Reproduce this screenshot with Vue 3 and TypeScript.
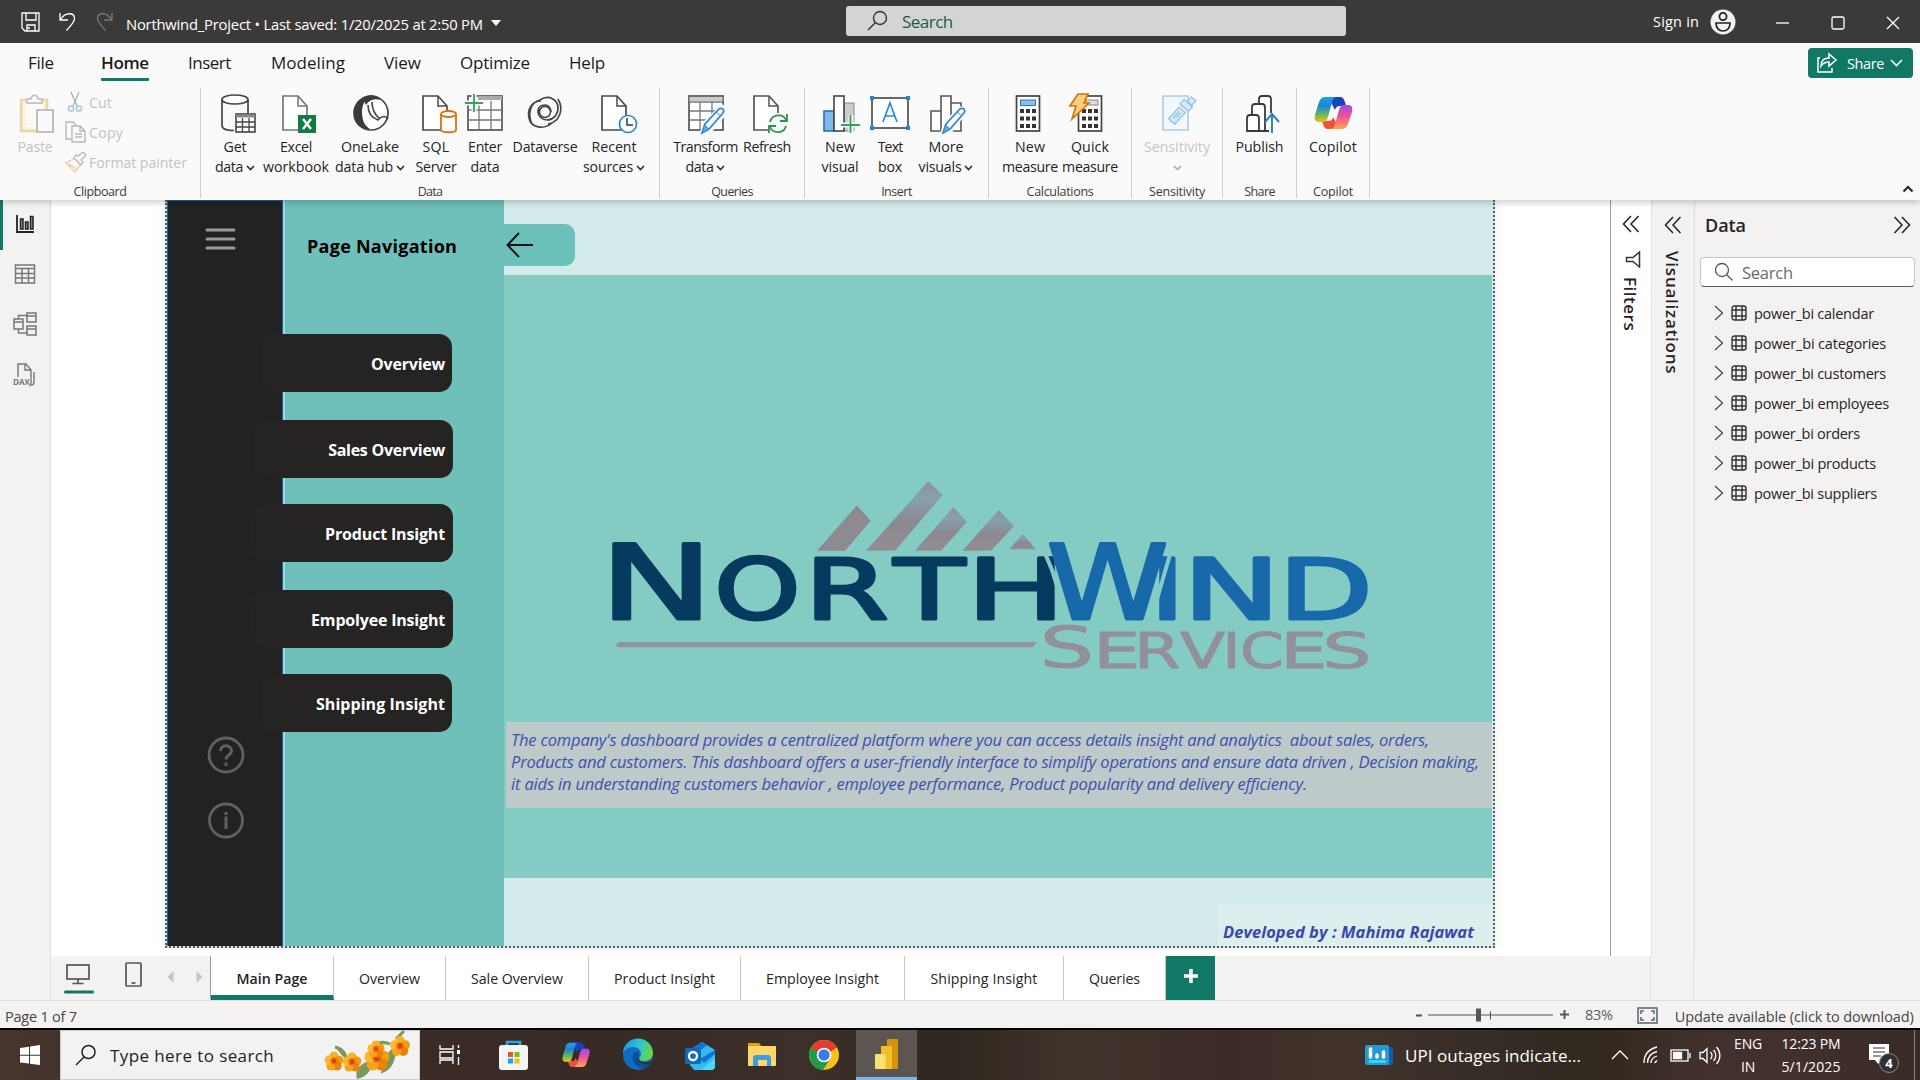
<script setup lang="ts">
interface RibbonItem {
  icon: string
  width: number
  dx?: number
  lines: [string, number][]
  caret?: boolean
  disabled?: boolean
}
interface RibbonGroup {
  label: string
  labelWidth: number
  width: number
  items: RibbonItem[]
}

// Tunes letter spacing so that a label takes exactly the given length in px.
const vFit = {
  mounted(el: HTMLElement, binding: { value: number; modifiers: Record<string, boolean> }) {
    const range = document.createRange()
    range.selectNodeContents(el)
    const box = range.getBoundingClientRect()
    const size = binding.modifiers.vertical ? box.height : box.width
    const count = (el.textContent ?? '').length
    if (count > 1) el.style.letterSpacing = `${(binding.value - size) / (count - 0.5)}px`
  },
}

const copilot = `<defs><linearGradient id="cpa" x1="0" y1="0" x2="0" y2="1"><stop offset="0" stop-color="#1fa2f0"/><stop offset=".35" stop-color="#1b83d8"/><stop offset=".7" stop-color="#62b95a"/><stop offset="1" stop-color="#f4c20d"/></linearGradient><linearGradient id="cpb" x1="0" y1="0" x2="0" y2="1"><stop offset="0" stop-color="#a04be8"/><stop offset=".45" stop-color="#ee5095"/><stop offset="1" stop-color="#ffa552"/></linearGradient></defs>
<path d="M14 1h12c3 0 4 2 5 5l1 4h-6c-3 0-4 1-5 4z" fill="#1742c0"/><path d="M26 33H14c-3 0-4-2-5-5l-1-3h6c3 0 4-1 5-4z" fill="#f0503c"/>
<path d="M11 1h12c-3 0-4 2-5 5l-4 15c-1 4-3 5-6 5H5c-4 0-5-3-4-7L5 6c1-3 3-5 6-5z" fill="url(#cpa)"/><path d="M28 33H16c3 0 4-2 5-5l4-14c1-4 3-5 6-5h3c4 0 5 3 4 7l-4 12c-1 3-3 5-6 5z" fill="url(#cpb)"/>`

const doc = '<path d="M4 3h15l9 10v24H4z" fill="#fff" stroke="#4a4a4a" stroke-width="1.7"/><path d="M19 3v10h9" fill="none" stroke="#4a4a4a" stroke-width="1.5"/>'
const pencil = '<path d="M16 40l3-9 14-15c3-2 6 1 4 4L23 36z" fill="#fff" stroke="#2b88d8" stroke-width="1.7"/><path d="M16 40l2.500-8 4.500 4z" fill="#62a9e6" stroke="#2b88d8"/><path d="M30 19l5 4" stroke="#2b88d8"/>'
const keys = (x: number, y: number) =>
  [0, 1, 2].map(r => [0, 1, 2].map(c => `<rect x="${x + c * 6}" y="${y + r * 7.5}" width="4" height="4" fill="#333"/>`).join('')).join('')

const icons: Record<string, string> = {
  data: '<ellipse cx="17" cy="6.500" rx="13" ry="4.500" fill="#fff" stroke="#444" stroke-width="1.700"/><path d="M4 6.500v26c0 3 4 5 12 5M30 6.500V20" fill="none" stroke="#444" stroke-width="1.700"/><rect x="18" y="21" width="19" height="18" fill="#fff" stroke="#444" stroke-width="1.600"/><path d="M18 23h19" stroke="#888" stroke-width="3"/><path d="M18 29h19M18 34h19M24.500 25v14M31 25v14" stroke="#444" stroke-width="1.300"/>',
  excel: doc.replace(/#4a4a4a/g, '#777') + '<rect x="19" y="22" width="18" height="18" fill="#107c41"/><path d="M24 26l8 10M32 26l-8 10" stroke="#fff" stroke-width="2.500"/>',
  lake: '<circle cx="20" cy="20" r="17" fill="#fff" stroke="#444" stroke-width="1.700"/><path d="M20 3c-5 2-9 8-9 16 0 9 3 14 8 17C8 37 3 29 3 20 3 11 10 3 20 3z" fill="#3b3a39"/><path d="M12 6c4-5 13-5 17 1-6-2-11 0-14 5z" fill="#3b3a39"/><path d="M17 12c0 8 4 13 10 15 5-5 8-4 10-1M21 9c0 7 3 13 8 17" fill="none" stroke="#444" stroke-width="1.600"/>',
  sql: doc + '<path d="M22 21v16c0 3 15 3 15 0V21" fill="#fff" stroke="#d9730d" stroke-width="1.800"/><ellipse cx="29.500" cy="21" rx="7.500" ry="3" fill="#fff" stroke="#d9730d" stroke-width="1.800"/>',
  enter: '<rect x="3" y="3" width="34" height="34" fill="#fff" stroke="#555" stroke-width="1.700"/><path d="M13 5h24" stroke="#aaa" stroke-width="4"/><path d="M3 17h34M3 27h34M14 8v29M26 8v29" stroke="#777" stroke-width="1.300"/><path d="M0 10h20M9 0v20" stroke="#fafafa" stroke-width="5"/><path d="M0 10h18M9 1v18" stroke="#31a354" stroke-width="1.800"/>',
  dataverse: '<path d="M15 7c9-6 18 0 18 8 0 7-5 12-11 12-5 0-9-4-9-8 0-5 3-7 7-7 3 0 6 3 6 7" fill="none" stroke="#444" stroke-width="1.700"/><path d="M27 30C19 37 6 35 4 25 2 16 7 8 16 8M33 6c6 10 2 23-10 25M15 7C6 9 2 20 7 31" fill="none" stroke="#444" stroke-width="1.600"/><circle cx="20" cy="19" r="5.500" fill="none" stroke="#444" stroke-width="1.500"/>',
  recent: doc + '<circle cx="30" cy="31" r="8.500" fill="#fff" stroke="#2b88d8" stroke-width="1.700"/><path d="M29 25v7h6" fill="none" stroke="#333" stroke-width="1.500"/>',
  transform: '<rect x="3" y="3" width="34" height="34" fill="#fff" stroke="#555" stroke-width="1.700"/><rect x="3.500" y="4" width="33" height="4" fill="#ccc"/><path d="M3 9h34M3 18h34M3 27h34M14 9v28M26 9v28" stroke="#777" stroke-width="1.300"/><path d="M13 42l4-13 19-18 8 6-18 22z" fill="#fafafa"/>' + pencil,
  refresh: doc.replace(/#4a4a4a/g, '#555') + '<circle cx="28" cy="31" r="11" fill="#fafafa"/><path d="M20 29c2-8 13-9 16-2M37 21v7h-7M36 33c-2 8-13 8-16 1M19 40v-7h7" fill="none" stroke="#31914a" stroke-width="1.800"/>',
  visual: '<rect x="4" y="18" width="10" height="20" fill="#7fb8ea" stroke="#2672b4" stroke-width="1.600"/><rect x="24" y="10" width="10" height="28" fill="#ccc" stroke="#888"/><rect x="14" y="3" width="10" height="35" fill="#fff" stroke="#444" stroke-width="1.600"/><path d="M22 32h18M31 22v18" stroke="#fafafa" stroke-width="5"/><path d="M21 32h19M30.500 22v18" stroke="#31a354" stroke-width="1.800"/>',
  textbox: '<rect x="2" y="5" width="36" height="30" fill="#fff" stroke="#444" stroke-width="1.600"/><path d="M13 29l7-19 7 19M15.500 23h9" fill="none" stroke="#2b88d8" stroke-width="1.700"/><path d="M0 3h4v4H0zM36 3h4v4h-4zM0 33h4v4H0zM36 33h4v4h-4z" fill="#1e88d2"/>',
  more: '<path d="M4 18h10v20H4zM24 10h10v28H24zM14 3h10v35H14z" fill="#fff" stroke="#555" stroke-width="1.600"/><path d="M13 42l3-12 17-17 8 5-18 24z" fill="#fafafa"/>' + pencil,
  measure: '<rect x="8.500" y="3" width="23" height="35" fill="#fff" stroke="#444" stroke-width="1.700"/><rect x="12.500" y="7" width="15" height="5.500" fill="#8bbcf0" stroke="#2b78c0"/>' + keys(12, 16),
  quick: '<rect x="12.500" y="3" width="23" height="35" fill="#fff" stroke="#444" stroke-width="1.700"/><rect x="20" y="7" width="12" height="5" fill="#ddd" stroke="#888"/>' + keys(16, 16) + '<path d="M12 1h10l-4 9h5L6 26l4-13H4z" fill="#fbd080" stroke="#d9730d" stroke-width="1.700"/>',
  sensitivity: '<path d="M6 3h25v34H6z" fill="#f1f8fc" stroke="#a6cde8" stroke-width="1.600"/><g transform="translate(7 6) scale(.75) rotate(42 20 20)" fill="#d6eaf7" stroke="#93c4e6" stroke-width="1.800"><rect x="14" y="13" width="11" height="21"/><path d="M18 17v12M21 17v9"/><rect x="12" y="1" width="15" height="8"/><rect x="17" y="-8" width="8" height="8"/></g>',
  publish: '<path d="M4 38V25c0-2 1-3 3-3h6c2 0 3 1 3 3v13zM9 22v-8c0-2 1-3 3-3h7c2 0 3 1 3 3v24h-6M16 11V6c0-2 1-3 3-3h6c2 0 3 1 3 3v14M22 38h4" fill="#fff" stroke="#3b3a39" stroke-width="1.800"/><path d="M29 40V21M22 29l7-8 7 8" fill="none" stroke="#2580b8" stroke-width="1.900"/>',
  copilot: `<g transform="translate(1 3)">${copilot}</g>`,
}

const groups: RibbonGroup[] = [
  {
    label: 'Data', labelWidth: 25, width: 459, items: [
      { icon: 'data', width: 68, dx: 3, lines: [['Get', 23], ['data', 28]], caret: true },
      { icon: 'excel', width: 54, dx: 3, lines: [['Excel', 32], ['workbook', 66]] },
      { icon: 'lake', width: 94, dx: 1, lines: [['OneLake', 58], ['data hub', 58]], caret: true },
      { icon: 'sql', width: 38, dx: 3, lines: [['SQL', 27], ['Server', 41]] },
      { icon: 'enter', width: 60, lines: [['Enter', 34], ['data', 29]] },
      { icon: 'dataverse', width: 60, lines: [['Dataverse', 65]] },
      { icon: 'recent', width: 78, dx: 4, lines: [['Recent', 45], ['sources', 50]], caret: true },
    ],
  },
  {
    label: 'Queries', labelWidth: 42, width: 145, items: [
      { icon: 'transform', width: 91, lines: [['Transform', 65], ['data', 28]], caret: true },
      { icon: 'refresh', width: 32, dx: 3, lines: [['Refresh', 48]] },
    ],
  },
  {
    label: 'Insert', labelWidth: 31, width: 184, items: [
      { icon: 'visual', width: 70, lines: [['New', 30], ['visual', 37]] },
      { icon: 'textbox', width: 30, lines: [['Text', 25], ['box', 24]] },
      { icon: 'more', width: 82, dx: 1, lines: [['More', 35], ['visuals', 43]], caret: true },
    ],
  },
  {
    label: 'Calculations', labelWidth: 67, width: 143, items: [
      { icon: 'measure', width: 82, dx: -2, lines: [['New', 30], ['measure', 56]] },
      { icon: 'quick', width: 38, dx: -4, lines: [['Quick', 38], ['measure', 56]] },
    ],
  },
  { label: 'Sensitivity', labelWidth: 56, width: 91, items: [{ icon: 'sensitivity', width: 90, lines: [['Sensitivity', 66]], caret: true, disabled: true }] },
  { label: 'Share', labelWidth: 31, width: 74, items: [{ icon: 'publish', width: 73, dx: 3, lines: [['Publish', 48]] }] },
  { label: 'Copilot', labelWidth: 40, width: 73, items: [{ icon: 'copilot', width: 72, lines: [['Copilot', 48]] }] },
]

const menu: [string, number, number][] = [
  ['File', 28, 26], ['Home', 47, 48], ['Insert', 39, 43], ['Modeling', 40, 74],
  ['View', 39, 37], ['Optimize', 39, 70], ['Help', 39, 36],
]
const navButtons: [string, number, number, number, number, number][] = [
  ['Overview', 262, 334, 190, 58, 74],
  ['Sales Overview', 254, 420, 199, 58, 117],
  ['Product Insight', 251, 504, 202, 58, 120],
  ['Empolyee Insight', 251, 590, 202, 58, 134],
  ['Shipping Insight', 262, 674, 190, 58, 129],
]
const intro: [string, number][] = [
  ["The company's dashboard provides a centralized platform where you can access details insight and analytics\u00a0 about sales, orders,", 918],
  ['Products and customers. This dashboard offers a user-friendly interface to simplify operations and ensure data driven , Decision making,', 968],
  ['it aids in understanding customers behavior , employee performance, Product popularity and delivery efficiency.', 796],
]
const tables: [string, number][] = [
  ['power_bi calendar', 120], ['power_bi categories', 132], ['power_bi customers', 132],
  ['power_bi employees', 135], ['power_bi orders', 106], ['power_bi products', 122], ['power_bi suppliers', 123],
]
const tabs: [string, number, number][] = [
  ['Main Page', 123, 71], ['Overview', 112, 61], ['Sale Overview', 143, 92], ['Product Insight', 152, 101],
  ['Employee Insight', 164, 113], ['Shipping Insight', 159, 107], ['Queries', 102, 51],
]
const flowers = [[335, 30, 9], [353, 31, 9], [378, 27, 12], [401, 15, 9.5], [377, 18, 8]]

// Left bearing, ink width and advance of the wordmark capitals, in em.
const metrics: Record<string, [number, number, number]> = {
  N: [0.098, 0.552, 0.748], O: [0.056, 0.675, 0.787], R: [0.098, 0.568, 0.695], T: [-0.003, 0.617, 0.611],
  H: [0.098, 0.556, 0.752], W: [0.033, 0.923, 0.989], I: [0.098, 0.099, 0.295], D: [0.098, 0.613, 0.77],
  S: [0.066, 0.503, 0.635], E: [0.098, 0.47, 0.632], V: [0.008, 0.668, 0.684], C: [0.056, 0.588, 0.698],
}
const place = (glyphs: [string, number, number, number][], stroke: number) =>
  glyphs.map(([ch, from, to, size]) => {
    const [lsb, ink, adv] = metrics[ch]
    const scale = (to - from - stroke) / ink
    return { ch, size, x: from + stroke / 2 - lsb * scale, length: adv * scale }
  })
const words = [
  { fill: '#063a5f', stroke: 3, y: 159, glyphs: place([['N', 23, 110, 103], ['O', 129, 206, 84], ['R', 225, 297, 84], ['T', 302, 377, 84], ['H', 388, 464, 84]], 3) },
  { fill: '#1769aa', stroke: 3, y: 159, glyphs: place([['W', 459, 576, 103], ['I', 570, 585, 84], ['N', 604, 679, 84], ['D', 699, 777, 84]], 3) },
  { fill: '#92909a', stroke: 1, y: 207.5, glyphs: place([['S', 455, 499, 57], ['E', 510, 546, 49], ['R', 550, 589, 49], ['V', 590, 635, 49], ['I', 638, 645, 49], ['C', 653, 691, 49], ['E', 697, 733, 49], ['S', 737, 777, 49]], 1) },
]
</script>

<template>
  <div class="app">
    <header class="titlebar">
      <svg class="quick" width="100" height="24" viewBox="0 0 100 24" fill="none" stroke="#fff" stroke-width="1.300">
        <path d="M1 3h17v18H4l-3-3zM5 3v7h10V3M6 21v-6h8v6M6 18h3" />
        <path d="M39 3v7h8M39.500 9.500c5-8 14-7 14-1 0 4-4 7-8 12" />
        <path d="M91 3v7h-8M90.500 9.500c-5-8-14-7-14-1 0 4 4 7 8 12" stroke="#777" />
      </svg>
      <span v-fit="357" class="doc-name">Northwind_Project • Last saved: 1/20/2025 at 2:50 PM</span>
      <i class="title-caret" />
      <div class="top-search">
        <svg width="22" height="22" viewBox="0 0 22 22" fill="none" stroke="#333" stroke-width="1.400"><circle cx="13" cy="8" r="6.500" /><path d="M8.500 12.500L1 20" /></svg>
        <span v-fit="51">Search</span>
      </div>
      <span v-fit="46" class="signin">Sign in</span>
      <svg class="avatar" width="26" height="26" viewBox="0 0 26 26"><circle cx="13" cy="13" r="12.500" fill="#f3f2f1" /><g fill="none" stroke="#222" stroke-width="1.700"><circle cx="13" cy="7.500" r="3.600" /><path d="M6 14h14c0 5-3 8-7 8s-7-3-7-8z" /></g></svg>
      <svg class="winbtns" width="126" height="16" viewBox="0 0 126 16" fill="none" stroke="#fff" stroke-width="1.300"><path d="M0 8h13" /><rect x="56" y="2" width="12" height="12" rx="1.500" /><path d="M111 2l12 12M123 2l-12 12" /></svg>
    </header>

    <nav class="menu">
      <span v-for="([name, gap, w]) in menu" :key="name" :class="['menu-item', { active: name === 'Home' }]" :style="{ marginLeft: gap + 'px', width: w + 'px' }"><b v-fit="w">{{ name }}</b></span>
      <button class="share">
        <svg width="20" height="22" viewBox="0 0 20 22" fill="none" stroke="#fff" stroke-width="1.500"><path d="M3 6H1v14h14v-4M12 2l7 6-7 6v-4c-4 0-6 1-8 4 0-5 3-8 8-8z" /></svg>
        <span v-fit="37">Share</span>
        <svg class="share-caret" width="13" height="8" viewBox="0 0 13 8" fill="none" stroke="#fff" stroke-width="1.600"><path d="M1 1l5.500 5.500L12 1" /></svg>
      </button>
    </nav>

    <section class="ribbon">
      <div class="group clipboard">
        <div class="clip-body">
          <div class="paste">
            <svg width="36" height="40" viewBox="-2 1 36 40"><path d="M2 7h26v31H2z" fill="#fbf3da" stroke="#efd3a8" stroke-width="2.500" /><path d="M6 11h18v23H6z" fill="#fcfaf5" /><path d="M8 10V6h4c1-5 6-5 7 0h4v4z" fill="#fafafa" stroke="#bbb" stroke-width="1.500" /><path d="M18 17h16v22H18z" fill="#fafafa" stroke="#b0b0b0" stroke-width="1.700" /></svg>
            <span v-fit="35">Paste</span>
          </div>
          <div class="clip-list">
            <div><svg width="22" height="22" viewBox="0 0 22 22" fill="none" stroke="#aaa" stroke-width="1.200"><path d="M6 1l6 14M14 1L8 15" /><circle cx="6" cy="17.500" r="2.600" stroke="#9fc6e4" stroke-width="1.500" /><circle cx="14" cy="17.500" r="2.600" stroke="#9fc6e4" stroke-width="1.500" /></svg><span v-fit="23">Cut</span></div>
            <div><svg width="22" height="22" viewBox="0 0 22 22" fill="#fafafa" stroke="#b5b5b5" stroke-width="1.300"><path d="M6 18H1V1h7l3 3" /><path d="M7 5h8l5 5v11H7zM15 5v5h5M10 13h7M10 16h7" /></svg><span v-fit="34">Copy</span></div>
            <div><svg width="22" height="22" viewBox="0 0 22 22" fill="#fafafa" stroke="#b5b5b5" stroke-width="1.300"><path d="M1 12l9-5 6 6-6 8z" stroke="#efc9a0" /><path d="M4 13l7 5" stroke="#efc9a0" /><path d="M9 7l7 7 2-3-2-2 5-5-3-3-5 4-2-1z" /></svg><span v-fit="98">Format painter</span></div>
          </div>
        </div>
        <span v-fit="53" class="group-label">Clipboard</span>
      </div>
      <div v-for="g in groups" :key="g.label" class="group" :style="{ width: g.width + 'px' }">
        <div class="items">
          <div v-for="it in g.items" :key="it.icon" :class="['item', { disabled: it.disabled }]" :style="{ width: it.width + 'px' }">
            <svg width="40" height="42" :viewBox="`${-(it.dx ?? 0)} 0 40 42`" v-html="icons[it.icon]" />
            <div v-for="([t, w], i) in it.lines" :key="t" class="line">
              <span v-fit="w">{{ t }}</span>
              <svg v-if="it.caret && i === 1" class="caret" width="9" height="6" viewBox="0 0 9 6"><path d="M1 1l3.500 3.500L8 1" fill="none" stroke="#333" stroke-width="1.700" /></svg>
            </div>
            <div v-if="it.caret && it.lines.length === 1" class="line"><svg class="caret" width="9" height="6" viewBox="0 0 9 6"><path d="M1 1l3.500 3.500L8 1" fill="none" stroke="#aaa" stroke-width="1.700" /></svg></div>
          </div>
        </div>
        <span v-fit="g.labelWidth" class="group-label">{{ g.label }}</span>
      </div>
      <svg class="collapse" width="12" height="8" viewBox="0 0 12 8"><path d="M1.500 6.500L6 2l4.500 4.500" fill="none" stroke="#222" stroke-width="2" /></svg>
    </section>

    <main class="workspace">
      <aside class="rail">
        <i class="rail-active" />
        <svg width="26" height="26" viewBox="0 0 26 26" fill="none" stroke="#222" stroke-width="1.500"><path d="M5 4v17h17" stroke-width="1.800" /><path d="M8.500 8h2.500v10H8.500zM13.500 11h2.500v7h-2.500zM18.500 5.500H21V18h-2.500z" fill="#999" /></svg>
        <svg width="26" height="26" viewBox="0 0 26 26" fill="none" stroke="#777" stroke-width="1.500"><rect x="3.500" y="4" width="19" height="18" /><path d="M3 7.500h20M3 12.500h20M3 17h20M10 8v14M16.500 8v14" /></svg>
        <svg width="26" height="26" viewBox="0 0 26 26" fill="none" stroke="#777" stroke-width="1.500"><path d="M2 8h9v10H2zM15 2h9v9h-9zM15 15h9v9h-9zM2 11h9M15 5h9M15 18h9M6.500 8V4.500H15M6.500 18v4H15" /></svg>
        <svg width="26" height="26" viewBox="0 0 26 26" fill="none" stroke="#777" stroke-width="1.400"><path d="M6 16V3h8l5 6v13c0 2-1 3-2 3M13 3v6h6M22 11v10c0 2-1 3-3 3" /><text x="1" y="23.500" font-size="9" font-weight="700" fill="#777" stroke="#f3f2f1" stroke-width="1" paint-order="stroke" textLength="17" lengthAdjust="spacingAndGlyphs">DAX</text></svg>
      </aside>

      <section class="canvas">
        <div class="page">
          <div class="side" />
          <div class="drawer" />
          <div class="body" />
          <svg class="burger" width="31" height="24" viewBox="0 0 31 24" stroke="#9b9a99" stroke-width="3" stroke-linecap="round"><path d="M2 3h27M2 12h27M2 21h27" /></svg>
          <h2 class="nav-title"><span v-fit="150">Page Navigation</span></h2>
          <div class="back"><svg width="28" height="26" viewBox="0 0 28 26" fill="none" stroke="#111" stroke-width="1.900"><path d="M13 1L1.500 13 13 25M1.500 13H27" /></svg></div>
          <div v-for="([t, x, y, w, h, tw]) in navButtons" :key="t" class="nav-btn" :style="{ left: x - 167 + 'px', top: y - 200 + 'px', width: w + 'px', height: h + 'px', paddingRight: x + w - 445 + 'px' }"><span v-fit="tw">{{ t }}</span></div>
          <svg class="help" width="38" height="104" viewBox="0 0 38 104" fill="none" stroke="#62605f" stroke-width="2.800"><circle cx="19" cy="19" r="17" /><circle cx="19" cy="84.500" r="16.500" /><path d="M13.500 15c0-7 11-7 11 0 0 4-5.500 4-5.500 8.500M19 26.500v3.500M19 80.500V93M19 76v3" stroke-width="3" /></svg>

          <svg class="logo" width="800" height="230" viewBox="0 0 800 230">
            <defs>
              <linearGradient id="peak" x1="0" y1="0" x2="0" y2="1"><stop offset="0" stop-color="#939199" /><stop offset=".25" stop-color="#86a0ae" /><stop offset=".6" stop-color="#8b8990" /><stop offset="1" stop-color="#918d93" /></linearGradient>
            </defs>
            <g transform="scale(.5102 .3333)" fill="url(#peak)">
              <path d="M445 272L523 136 550 182 500 272z" fill="#8d8a91" /><path d="M541 272L663 64 691 105 598 272z" /><path d="M637 272L712 142 739 185 688 272z" /><path d="M730 272L801 150 831 198 786 272z" /><path d="M822 268L848 222 874 268z" />
              <path d="M50 554l8-8H876l-8 16H56z" fill="#93939b" />
            </g>
            <g font-family="DejaVu Sans" stroke-linejoin="round">
              <text v-for="word in words" :key="word.fill" :y="word.y" :fill="word.fill" :stroke="word.fill" :stroke-width="word.stroke"><tspan v-for="(g, i) in word.glyphs" :key="i" :x="g.x" :font-size="g.size" :textLength="g.length" lengthAdjust="spacingAndGlyphs">{{ g.ch }}</tspan></text>
            </g>
            <path d="M452 86L462 110 476 156M583 84L561 160" fill="none" stroke="#84cbc4" stroke-width="4" />
          </svg>

          <div class="intro"><p v-for="([t, w]) in intro" :key="w"><span v-fit="w">{{ t }}</span></p></div>
          <div class="credit"><span v-fit="251">Developed by : Mahima Rajawat</span></div>
        </div>
      </section>

      <aside class="filters">
        <svg class="dbl" width="18" height="18" viewBox="0 0 18 18"><path d="M9 1L1.500 9 9 17M16.500 1L9 9l7.500 8" /></svg>
        <svg class="funnel" width="16" height="17" viewBox="0 0 16 17"><path d="M14.500 1v15L8 10.500H1.500v-4H8z" fill="none" stroke="#333" stroke-width="1.500" /></svg>
        <span v-fit.vertical="54" class="vertical">Filters</span>
      </aside>
      <aside class="visuals">
        <svg class="dbl" width="18" height="18" viewBox="0 0 18 18"><path d="M9 1L1.500 9 9 17M16.500 1L9 9l7.500 8" /></svg>
        <span v-fit.vertical="123" class="vertical">Visualizations</span>
      </aside>
      <aside class="data">
        <div class="data-head"><span v-fit="41">Data</span><svg class="dbl" width="18" height="18" viewBox="0 0 18 18"><path d="M1.500 1L9 9l-7.500 8M9 1l7.500 8L9 17" /></svg></div>
        <div class="data-search"><svg width="20" height="20" viewBox="0 0 20 20" fill="none" stroke="#555" stroke-width="1.300"><circle cx="8" cy="8" r="6.500" /><path d="M12.500 12.500l6 6" /></svg><span v-fit="51">Search</span></div>
        <div v-for="([t, w]) in tables" :key="t" class="table">
          <svg width="10" height="16" viewBox="0 0 10 16" fill="none" stroke="#444" stroke-width="1.200"><path d="M1 1l7.500 7L1 15" /></svg>
          <svg class="grid-icon" width="16" height="16" viewBox="0 0 16 16" fill="none" stroke="#333" stroke-width="1.400"><rect x="1" y="1" width="14" height="14" rx="2.500" /><path d="M1 5h14M1 11h14M5 1v14M11 1v14" /></svg>
          <span v-fit="w">{{ t }}</span>
        </div>
      </aside>
    </main>

    <section class="tabs">
      <div class="view-modes">
        <svg width="146" height="36" viewBox="0 0 146 36" fill="none" stroke="#555" stroke-width="1.700"><rect x="3" y="7" width="22" height="14" /><path d="M14 21v4M8.500 25.500h11" /><path d="M1.500 34h27" stroke="#117865" stroke-width="3" stroke-linecap="round" /><rect x="62" y="5" width="15" height="23" rx="1" /><path d="M67.500 25h4" /><path d="M109.500 13v12l-6-6zM132.500 13v12l6-6z" fill="#c8c6c4" stroke="none" /></svg>
      </div>
      <div v-for="([t, w, tw]) in tabs" :key="t" :class="['tab', { active: t === 'Main Page' }]" :style="{ width: w + 'px' }"><span v-fit="tw">{{ t }}</span></div>
      <div class="add"><svg width="14" height="14" viewBox="0 0 14 14"><path d="M7 0v14M0 7h14" stroke="#fff" stroke-width="3.500" /></svg></div>
      <div class="tab-fill" /><div class="tab-fill mid" />
    </section>

    <footer class="status">
      <span v-fit="72">Page 1 of 7</span>
      <svg class="zoom" width="160" height="20" viewBox="0 0 160 20" stroke="#555" fill="none"><path d="M1 10.500h6" stroke-width="2" /><path d="M13 10h125M75.500 6.500v8" /><path d="M63.500 3.500v13" stroke-width="5" /><path d="M145 9.500h9M149.500 5v9" stroke-width="2" /></svg>
      <span v-fit="28" class="pct">83%</span>
      <svg class="fitpage" width="21" height="17" viewBox="0 0 21 17" fill="none" stroke="#5f6b73" stroke-width="1.600"><rect x="1" y="1" width="19" height="15" /><path d="M4 7V4h3M14 4h3v3M17 10v3h-3M7 13H4v-3" /></svg>
      <span v-fit="239">Update available (click to download)</span>
    </footer>

    <footer class="taskbar">
      <svg class="start" width="20" height="20" viewBox="0 0 20 20" fill="#fff"><path d="M0 3l9-1.300v8H0zM10 1.500L20 0v9.700H10zM0 10.700h9v7.900l-9-1.200zM10 10.700h10V20l-10-1.300z" /></svg>
      <div class="task-search">
        <svg width="22" height="22" viewBox="0 0 22 22" fill="none" stroke="#222" stroke-width="1.500"><circle cx="13.500" cy="8" r="6.500" /><path d="M9 13l-8 8" /></svg>
        <span v-fit="164">Type here to search</span>
        <svg class="flowers" width="92" height="48" viewBox="320 0 92 48">
          <path d="M336 16c8 2 11 7 11 13M359 46c-1-7 4-12 12-15 1 8-6 14-12 15zM384 40c8-3 12-13 11-22-8 6-9 14-11 22zM375 14c6-4 12-3 16-1M397 8l8-8" fill="#78955a" stroke="#7c985e" stroke-width="3" />
          <g v-for="([x, y, r]) in flowers" :key="x" :transform="`translate(${x} ${y}) scale(${r / 10})`"><circle cy="-5.500" r="5" fill="#f6b221" /><circle cx="5.500" cy="-1" r="5" fill="#f39a0c" /><circle cx="3.500" cy="5.500" r="5" fill="#e98205" /><circle cx="-3.500" cy="5.500" r="5" fill="#f7a516" /><circle cx="-5.500" cy="-1" r="5" fill="#ffb52e" /><circle r="3.300" fill="#d8402a" stroke="#e9770b" stroke-width="1.500" /></g>
        </svg>
      </div>
      <svg class="apps" width="440" height="50" viewBox="420 0 440 50">
        <path d="M440 15v4h13v-4M440 34v-4h13v4M440 22h13v6h-13zM458.500 15v3M458.500 27v8" fill="none" stroke="#fff" stroke-width="1.300" /><path d="M457 20h3v4h-3z" fill="#fff" />
        <path d="M507 16v-4h13v4" fill="none" stroke="#29a8e8" stroke-width="2.500" /><rect x="499" y="15" width="29" height="25" rx="3" fill="#f4f4f4" /><path d="M508 22h5v5h-5z" fill="#f1511b" /><path d="M514.500 22h5v5h-5z" fill="#80bc06" /><path d="M508 28.500h5v5h-5z" fill="#00adef" /><path d="M514.500 28.500h5v5h-5z" fill="#fbbc09" />
        <g transform="translate(562 12) scale(.72 .76)" v-html="copilot" />
        <defs><linearGradient id="edge" x1="0" y1="0" x2="1" y2=".3"><stop offset="0" stop-color="#1595dc" /><stop offset=".55" stop-color="#2bc3d8" /><stop offset="1" stop-color="#63d84e" /></linearGradient></defs>
        <circle cx="638" cy="25" r="15" fill="#0f6cc4" /><path d="M623 24a15 15 0 0 1 30-1c0 5-4 8-9 8-4 0-6-2-4-4 3-5-1-10-7-10-5 0-9 3-10 7z" fill="url(#edge)" /><path d="M634 22c-3 6-1 12 6 16 4 1 8-1 11-5-5 2-11 1-13-3-1-2 0-3 1-5 0-2-2-4-5-3z" fill="#0a4f96" /><path d="M639 25c-2 4 1 7 5 7 4 1 8-1 9-3-1 3-2 4-4 5-8 1-14-4-10-9z" fill="#382c26" />
        <path d="M690 20l12-8 13 8v16a4 4 0 0 1-4 4h-17l-4-5z" fill="#35b8f1" /><path d="M693 18l9-6 5 3-12 10zM700 29l15-9v4l-11 9z" fill="#1272cf" /><path d="M701 40l14-12v8a4 4 0 0 1-4 4z" fill="#4ad9fb" /><rect x="685" y="18" width="16" height="16" rx="2" fill="#0f6cbd" /><circle cx="693" cy="26" r="4" fill="none" stroke="#fff" stroke-width="2.300" />
        <path d="M748 13h11l3 4h-14z" fill="#e0a010" /><rect x="748" y="16" width="28" height="20" rx="1" fill="#ffd667" /><path d="M753 36v-8q0-3 3-3h12q3 0 3 3v8h-4v-6h-9v6z" fill="#3a9de0" />
        <circle cx="824" cy="25" r="15" fill="#fbc116" /><path d="M811 17.500A15 15 0 0 0 823 40L830.500 28.500 824 25z" fill="#229a48" /><path d="M811 17.500A15 15 0 0 1 837 17.500L824 26z" fill="#e63b2e" /><circle cx="824" cy="25" r="7.300" fill="#fff" /><circle cx="824" cy="25" r="5.700" fill="#3a7cec" />
      </svg>
      <div class="pbi"><svg width="24" height="31" viewBox="0 0 24 31"><rect x="12" y="0" width="11" height="30" rx="1" fill="#d8930c" /><rect x="6" y="7" width="11" height="23" rx="1" fill="#efc02c" /><rect x="0" y="15" width="10.500" height="15" rx="1" fill="#f8e071" /></svg></div>
      <svg class="news" width="28" height="21" viewBox="0 0 28 21"><rect x="6" y="2" width="22" height="18" rx="2" fill="#115ea8" /><rect width="24" height="20" rx="2" fill="#2899d2" /><path d="M5.500 4v8M12 10v2M18.500 7v5" stroke="#fff" stroke-width="3.500" stroke-linecap="round" /><path d="M4 16.500h17" stroke="#30e3f4" stroke-width="2.500" /></svg>
      <span v-fit="176" class="headline">UPI outages indicate...</span>
      <svg class="tray" width="110" height="24" viewBox="1611 0 110 24" fill="none" stroke="#fff" stroke-width="1.300"><path d="M1612 16l8-8 8 8" /><path d="M1644 20c0-9 5-14 13-16M1647.500 20c0-6 4-10 9.500-11.500M1651 20c0-4 3-6 6-7M1654.500 20l2.500-2.500" /><rect x="1671" y="7" width="17" height="11" /><path d="M1673.500 9.500h8v6h-8z" fill="#fff" /><path d="M1690 10v5M1700 9.500v6h3l4 4v-14l-4 4zM1710.500 9c2 2 2 5 0 7M1713.500 7c3 3 3 8 0 11M1716.500 4c4.500 5 4.500 12 0 17" /></svg>
      <div class="two lang"><span v-fit="28">ENG</span><span v-fit="14">IN</span></div>
      <div class="two clock"><span v-fit="59">12:23 PM</span><span v-fit="59">5/1/2025</span></div>
      <div class="notif"><svg width="20" height="22" viewBox="0 0 20 22"><path d="M0 0h20v16h-8l-3 4-3-4H0z" fill="#fff" /><path d="M4 4h12M4 8h12M4 12h8" stroke="#333" stroke-width="1.200" /></svg><b>4</b></div>
      <i class="peek" />
    </footer>
  </div>
</template>

<style>
body { margin: 0; overflow: hidden; background: #f3f2f1; }
</style>

<style scoped>
.app { width: 1920px; height: 1080px; overflow: hidden; display: flex; flex-direction: column; font-family: "Open Sans", "Noto Sans", sans-serif; font-stretch: 92%; color: #252423; white-space: nowrap; }
.app > * { flex: none; box-sizing: border-box; }
svg, span, i { flex: none; }
svg { display: block; overflow: visible; }

.titlebar { height: 43px; background: #3b3a38; color: #fff; display: flex; align-items: center; }
.quick { margin-left: 21px; }
.doc-name { width: 365px; margin: 4px 0 0 5px; font-size: 14.800px; }
.title-caret { border: 5px solid transparent; border-top: 6px solid #fff; border-bottom: 0; margin-top: 3px; }
.top-search { width: 500px; height: 30px; margin: 0 0 1px 345px; background: #d4d4d2; border-radius: 3px; display: flex; align-items: center; gap: 13px; padding-left: 21px; box-sizing: border-box; font-size: 17px; color: #1c5a4d; }
.signin { width: 46px; margin-left: 307px; font-size: 14.500px; }
.avatar { margin-left: 11px; }
.winbtns { margin: 3px 0 0 40px; }

.menu { height: 45px; background: #fafafa; display: flex; align-items: flex-start; position: relative; z-index: 4; }
.menu-item { height: 35px; margin-top: 3px; box-sizing: border-box; line-height: 33px; font-size: 17px; color: #1a1a1a; }
.menu-item b { font-weight: 400; }
.menu-item.active b { font-weight: 600; }
.menu-item.active { border-bottom: 3px solid #117865; border-radius: 1px; }
.share { width: 105px; height: 30px; margin: 5px 7px 0 auto; border: 0; border-radius: 4px; background: #117865; color: #fff; display: flex; align-items: center; padding: 0 0 0 9px; font: inherit; font-size: 14.500px; }
.share span { margin-left: 10px; width: 37px; }
.share-caret { margin-left: 6px; }

.ribbon { height: 112px; background: #fafafa; display: flex; position: relative; z-index: 3; box-shadow: 0 2px 7px rgba(0, 0, 0, .22); }
.group { height: 110px; box-sizing: border-box; border-right: 1px solid #d2d0ce; display: flex; flex-direction: column; align-items: center; justify-content: space-between; }
.group-label { font-size: 12.500px; line-height: 16px; margin-bottom: -2px; color: #3b3a39; }
.items { display: flex; align-self: flex-start; padding-top: 5px; }
.item { display: flex; flex-direction: column; align-items: center; }
.line { height: 20px; display: flex; align-items: center; gap: 3px; font-size: 14.200px; position: relative; top: 1px; }
.caret { margin-top: 4px; }
.disabled .line { color: #c8c6c4; }
.clipboard { width: 201px; }
.clip-body { display: flex; align-self: stretch; color: #c4c2c0; font-size: 14.200px; }
.paste { margin: 6px 0 0 17px; width: 36px; display: flex; flex-direction: column; gap: 3px; align-items: center; }
.clip-list { margin: 3px 0 0 12px; display: flex; flex-direction: column; gap: 8px; }
.clip-list div { height: 22px; display: flex; align-items: center; gap: 2px; }
.collapse { margin: 97px 6px 0 auto; }

.workspace { height: 756px; display: flex; }
.workspace > * { flex: none; box-sizing: border-box; }
.rail { width: 51px; background: #f3f2f1; border-right: 1px solid #e1dfdd; display: flex; flex-direction: column; gap: 24px; padding: 11px 0 0 12px; position: relative; }
.rail-active { position: absolute; left: 0; top: 0; width: 3px; height: 50px; background: #117865; }
.canvas { width: 1559px; background: #fff; padding-left: 114px; }
.page { width: 1326px; height: 746px; position: relative; border: 2px dotted #605e5c; border-top: 0; box-shadow: 0 0 10px rgba(0, 0, 0, .08); background: #d3eaea; }
.page > * { position: absolute; }
.side { left: 0; top: 0; width: 116px; height: 746px; background: #222; box-sizing: border-box; border: 1px solid #1261b5; border-bottom: 0; }
.drawer { left: 116px; top: 0; width: 221px; height: 746px; background: #6fbfba; box-sizing: border-box; border-left: 2px solid #a5d5d7; }
.body { left: 337px; top: 75px; width: 988px; height: 603px; background: #84cbc4; }
.burger { left: 38px; top: 27px; }
.nav-title { left: 140px; top: 34px; margin: 0; font-size: 18px; line-height: 24px; color: #000; }
.back { left: 335px; top: 24px; width: 73px; height: 42px; background: #6bc0ba; border-radius: 0 10px 10px 0; display: flex; align-items: center; padding: 0 0 1px 4px; box-sizing: border-box; }
.nav-btn { background: #252423; border-radius: 13px; color: #fff; font-weight: 700; font-size: 16px; display: flex; align-items: center; justify-content: flex-end; padding-top: 1px; box-sizing: border-box; }
.help { left: 40px; top: 536px; }
.logo { left: 423px; top: 260px; }
.intro { left: 339px; top: 522px; width: 986px; height: 86px; background: #bec9c9; color: #424fae; font-style: italic; font-size: 16.500px; padding: 7px 0 0 5px; box-sizing: border-box; }
.intro p { margin: 0; line-height: 22px; }
.credit { left: 1051px; top: 704px; width: 275px; height: 42px; background: #dceeed; color: #3949ab; font-weight: 700; font-style: italic; font-size: 16.500px; line-height: 24px; padding: 16px 0 0 5px; box-sizing: border-box; }

.filters { width: 41px; background: #fff; border-left: 1px solid #a19f9d; }
.visuals { width: 43px; background: #f3f2f1; border-left: 1px solid #e1dfdd; }
.data { width: 226px; background: #f3f2f1; border-left: 1px solid #e1dfdd; }
.dbl path { fill: none; stroke: #222; stroke-width: 1.500; }
.filters .dbl { margin: 15px 0 0 11px; }
.funnel { margin: 18px 0 0 14px; }
.vertical { display: block; writing-mode: vertical-rl; font-weight: 600; font-size: 17px; line-height: 24px; }
.filters .vertical { margin: 9px 0 0 7px; }
.visuals .dbl { margin: 16px 0 0 12px; }
.visuals .vertical { margin: 17px 0 0 8px; }
.data-head { height: 50px; display: flex; align-items: center; justify-content: space-between; padding: 0 9px 0 10px; font-size: 18px; font-weight: 600; }
.data-search { width: 215px; height: 30px; margin: 7px 0 11px 5px; background: #fff; border: 1px solid #c8c6c4; border-bottom-color: #605e5c; border-radius: 4px; display: flex; align-items: center; gap: 8px; padding-left: 13px; box-sizing: border-box; font-size: 16.500px; color: #6b6967; }
.table { height: 30px; display: flex; align-items: center; padding-left: 19px; font-size: 14.500px; }
.grid-icon { margin: 0 7px 0 7px; }

.tabs { height: 45px; background: #f3f2f1; border-bottom: 1px solid #e1dfdd; padding-left: 50px; display: flex; }
.view-modes { width: 161px; border-left: 1px solid #e1dfdd; border-right: 1px solid #a19f9d; box-sizing: border-box; padding: 2px 0 0 13px; }
.tab { background: #fff; border-right: 1px solid #c8c6c4; box-sizing: border-box; display: flex; align-items: center; justify-content: center; font-size: 14.200px; }
.tab.active { font-weight: 600; border-bottom: 5px solid #117865; padding-top: 5px; }
.add { width: 49px; background: #117865; display: flex; align-items: center; justify-content: center; padding-bottom: 4px; box-sizing: border-box; }
.tab-fill { width: 436px; box-sizing: border-box; border-right: 1px solid #e1dfdd; }
.tab-fill.mid { width: 43px; }

.status { height: 29px; background: #f3f2f1; border-bottom: 2px solid #000; display: flex; align-items: center; padding: 4px 0 0 5px; font-size: 14.500px; color: #484644; }
.zoom { margin: -4px 0 0 1338px; }
.pct { margin: -5px 24px 0 10px; color: #605e5c; }
.fitpage { margin: -2px 17px 0 0; }

.taskbar { height: 50px; display: flex; align-items: center; color: #fff; font-size: 17px; background: linear-gradient(90deg, #45352d, #3b2b26 24%, #372b25 32%, #3c302a 42%, #2e271f 49%, #40332c 56%, #3d2b27 64%, #41332c 70%, #352d26 78%, #31281f 83%, #40302b 88%, #43302c 93%, #382b25); }
.start { margin: 0 20px; }
.task-search { width: 360px; height: 50px; background: #f2f2f2; border: 1px solid #ccc; box-sizing: border-box; display: flex; align-items: center; color: #222; }
.task-search > svg:first-child { margin: 0 13px 0 14px; }
.task-search span { width: 163px; }
.flowers { margin-left: 46px; }
.apps { width: 440px; margin-right: -4px; }
.pbi { width: 61px; height: 50px; background: #5d5650; border-bottom: 3px solid #76b9ed; box-sizing: border-box; display: flex; justify-content: center; align-items: center; padding-top: 2px; }
.news { margin-left: 448px; }
.headline { margin-left: 12px; width: 176px; }
.tray { margin-left: 30px; }
.two { display: flex; flex-direction: column; align-items: center; font-size: 14px; line-height: 23px; }
.lang { width: 30px; margin-left: 12px; }
.clock { width: 60px; margin-left: 18px; }
.notif { position: relative; margin: 0 0 0 28px; }
.notif b { position: absolute; left: 10px; top: 9px; width: 20px; height: 20px; border: 1px solid #888; border-radius: 50%; background: #30302f; font-size: 13px; line-height: 18px; text-align: center; box-sizing: border-box; }
.peek { width: 1px; height: 50px; background: #8a8480; margin-left: 25px; }
</style>
